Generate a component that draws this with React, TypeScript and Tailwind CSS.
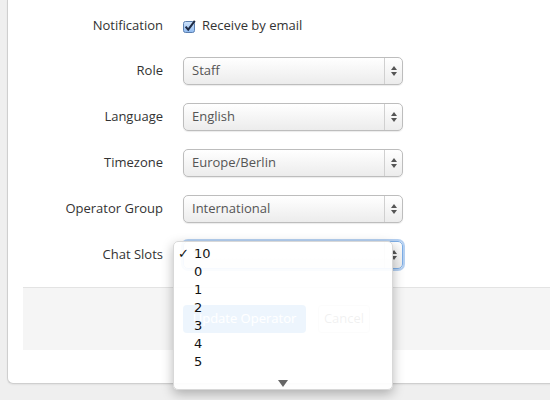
import React from "react";

const labelCls = "w-[155px] shrink-0 text-right text-[13px] text-[#333]";

function Arrows() {
  return (
    <svg width="8" height="12" viewBox="0 0 8 12" className="block">
      <path d="M4 1 L7 5 L1 5 Z" fill="#555" />
      <path d="M4 11 L7 7 L1 7 Z" fill="#555" />
    </svg>
  );
}

function Select({ value, focused }: { value: string; focused?: boolean }) {
  return (
    <div
      className={
        "ml-[20px] flex h-[28px] w-[220px] items-center rounded-[5px] border bg-gradient-to-b from-[#ffffff] to-[#ececec] " +
        (focused
          ? "border-[#7daee6] shadow-[0_0_0_2px_rgba(120,170,230,0.55)]"
          : "border-[#bdbdbd] shadow-[0_1px_1px_rgba(0,0,0,0.08)]")
      }
    >
      <span className="flex-1 pl-[8px] text-[13px] text-[#555]">{value}</span>
      <div className="flex h-full w-[18px] items-center justify-center border-l border-[#d0d0d0]">
        <Arrows />
      </div>
    </div>
  );
}

function Row({ label, children, className }: { label: string; children: React.ReactNode; className?: string }) {
  return (
    <div className={"flex h-[28px] items-center " + (className ?? "")}>
      <div className={labelCls}>{label}</div>
      {children}
    </div>
  );
}

export default function App() {
  const items = ["10", "0", "1", "2", "3", "4", "5"];
  return (
    <div
      className="relative h-[400px] w-[550px] overflow-hidden bg-[#efefef] pl-[7px]"
      style={{ fontFamily: '"Open Sans", "Liberation Sans", sans-serif' }}
    >
      <div className="h-[384px] w-[600px] rounded-bl-[6px] border-b border-l border-[#cfcfcf] bg-white pt-[11px] shadow-[0_1px_2px_rgba(0,0,0,0.06)]">
        <div className="flex flex-col gap-[18px]">
          <Row label="Notification" className="mb-[-1px] mt-[1px]">
            <div className="ml-[20px] flex items-center gap-[6px]">
              <svg width="13" height="13" viewBox="0 0 13 13" className="block">
                <defs>
                  <linearGradient id="cb" x1="0" y1="0" x2="0" y2="1">
                    <stop offset="0" stopColor="#cfe3fa" />
                    <stop offset="1" stopColor="#8fbaf0" />
                  </linearGradient>
                </defs>
                <rect x="0.5" y="1.5" width="11" height="11" rx="2" fill="url(#cb)" stroke="#5a7fb0" />
                <path d="M2.6 6.6 L5.2 9.6 L11.8 0.8" fill="none" stroke="#1d2a44" strokeWidth="2" />
              </svg>
              <span className="text-[13px] text-[#333]">Receive by email</span>
            </div>
          </Row>
          <Row label="Role">
            <Select value="Staff" />
          </Row>
          <Row label="Language">
            <Select value="English" />
          </Row>
          <Row label="Timezone">
            <Select value="Europe/Berlin" />
          </Row>
          <Row label="Operator Group">
            <Select value="International" />
          </Row>
          <Row label="Chat Slots">
            <Select value="10" focused />
          </Row>
        </div>
        <div className="ml-[15px] mt-[18px] flex h-[63px] items-start gap-[12px] border-t border-[#e3e3e3] bg-[#f5f5f5] pl-[160px] pt-[17px]">
          <div className="flex h-[28px] w-[123px] items-center justify-center rounded-[4px] bg-[#0a73d8] text-[13px] text-white">
            Update Operator
          </div>
          <div className="flex h-[28px] w-[52px] items-center justify-center rounded-[4px] border border-[#d0d0d0] bg-white text-[13px] text-[#333]">
            Cancel
          </div>
        </div>
      </div>

      <div
        className="absolute left-[173px] top-[241px] h-[149px] w-[220px] rounded-[5px] border border-[#d8d8d8] bg-white/[0.93] pt-[3px] shadow-[0_4px_12px_rgba(0,0,0,0.28)]"
        style={{ fontFamily: '"DejaVu Sans", "Liberation Sans", sans-serif' }}
      >
        {items.map((it, i) => (
          <div key={it} className="relative flex h-[18px] items-center pl-[20px] text-[13px] text-[#111]">
            {i === 0 && <span className="absolute left-[4px] text-[13px]">✓</span>}
            {it}
          </div>
        ))}
        <div className="mt-[9px] flex justify-center">
          <svg width="10" height="8" viewBox="0 0 10 8" className="block">
            <path d="M0 0 L10 0 L5 7 Z" fill="#666" />
          </svg>
        </div>
      </div>
    </div>
  );
}
